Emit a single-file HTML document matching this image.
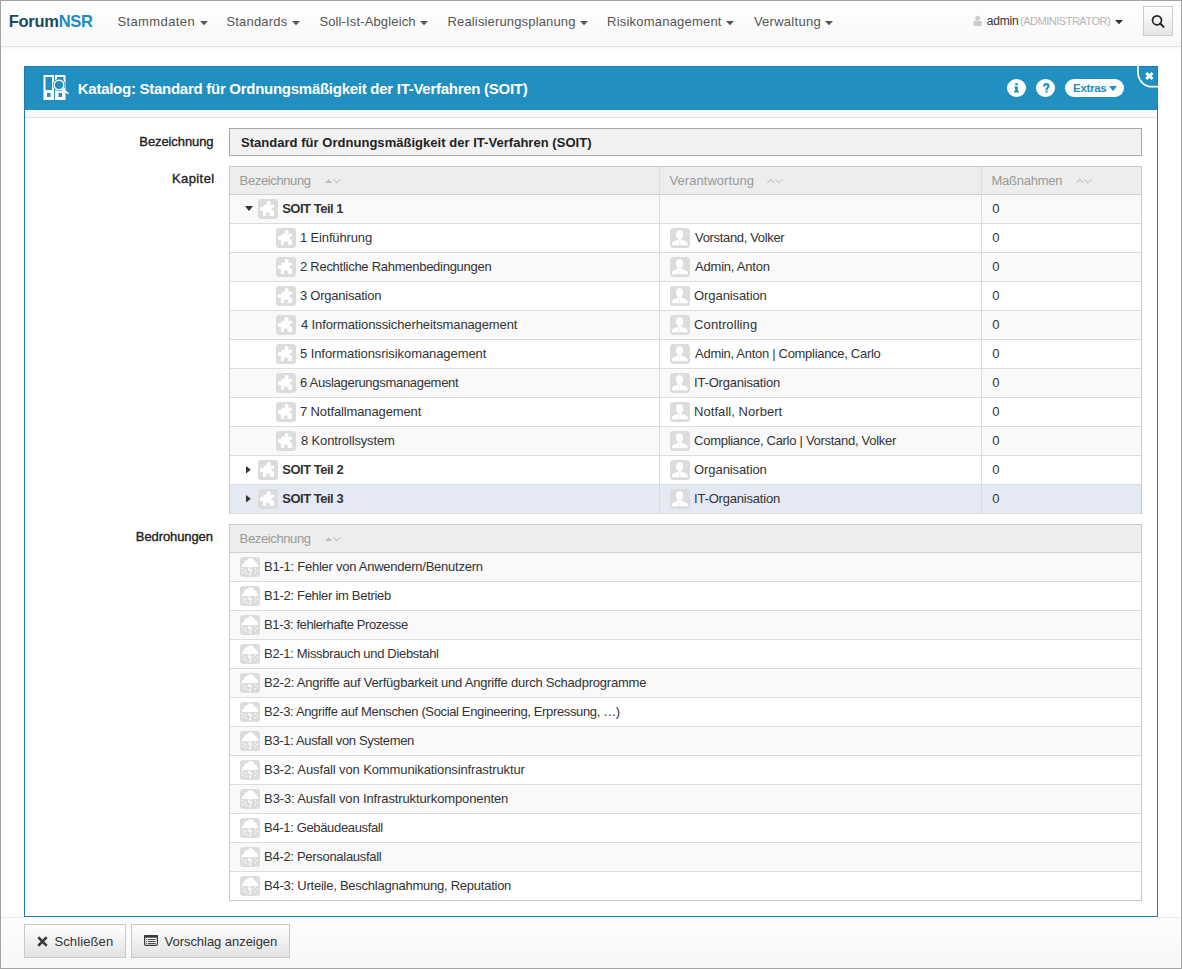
<!DOCTYPE html>
<html><head><meta charset="utf-8"><style>
*{box-sizing:border-box}
html,body{margin:0;padding:0;width:1182px;height:969px;overflow:hidden;background:#fff;font-family:"Liberation Sans",sans-serif;color:#333}
.ab{position:absolute}
.ab svg{display:block}
.tx{position:absolute;white-space:nowrap;line-height:20px}
.hl{position:absolute;height:1px;background:#dcdcdc}
.vl{position:absolute;width:1px;background:#dcdcdc}
.frame{position:absolute;left:0;top:0;width:1182px;height:969px;border:1px solid #a3a3a3;z-index:50}
</style></head><body>
<div class="ab" style="left:0;top:0;width:1182px;height:46px;background:linear-gradient(#fff,#f8f8f8);box-shadow:0 2px 6px rgba(0,0,0,.055)"></div>
<div class="hl" style="left:0;top:46px;width:1182px;background:#e4e4e4"></div>
<svg class="ab" width="8" height="5" viewBox="0 0 8 5" style="left:200px;top:21px"><path d="M0 0h8L4 4.3z" fill="#555"/></svg>
<svg class="ab" width="8" height="5" viewBox="0 0 8 5" style="left:292px;top:21px"><path d="M0 0h8L4 4.3z" fill="#555"/></svg>
<svg class="ab" width="8" height="5" viewBox="0 0 8 5" style="left:420px;top:21px"><path d="M0 0h8L4 4.3z" fill="#555"/></svg>
<svg class="ab" width="8" height="5" viewBox="0 0 8 5" style="left:580px;top:21px"><path d="M0 0h8L4 4.3z" fill="#555"/></svg>
<svg class="ab" width="8" height="5" viewBox="0 0 8 5" style="left:726px;top:21px"><path d="M0 0h8L4 4.3z" fill="#555"/></svg>
<svg class="ab" width="8" height="5" viewBox="0 0 8 5" style="left:825px;top:21px"><path d="M0 0h8L4 4.3z" fill="#555"/></svg>
<svg class="ab" width="10" height="12" viewBox="0 0 10 12" style="left:973px;top:15px"><circle cx="4.7" cy="3.2" r="2.5" fill="#ccc"/><path d="M0.6 6.6Q0.6 5.9 1.3 5.9H8Q8.7 5.9 8.7 6.6V9.4Q8.7 10.9 7.2 10.9H2.1Q0.6 10.9 0.6 9.4z" fill="#ccc"/></svg>
<svg class="ab" width="8" height="5" viewBox="0 0 8 5" style="left:1115px;top:20px"><path d="M0 0h8L4 4.2z" fill="#333"/></svg>
<div class="ab" style="left:1143px;top:6px;width:30px;height:30px;border:1px solid #ccc;background:linear-gradient(#fff,#e6e6e6)">
  <svg width="16" height="16" viewBox="0 0 16 16" style="position:absolute;left:5px;top:6px"><circle cx="8" cy="7.3" r="4.5" fill="none" stroke="#222" stroke-width="1.7"/><path d="M11.2 10.5L14.6 13.9" stroke="#222" stroke-width="1.9" stroke-linecap="round"/></svg>
</div>

<div class="ab" style="left:24px;top:66px;width:1134px;height:851px;border:1px solid #1b7db1;background:#fff"></div>
<div class="ab" style="left:24px;top:66px;width:1134px;height:44px;background:#218fc0;border-top:1px solid #1b7db1;border-left:1px solid #1b7db1;border-right:1px solid #1b7db1"></div>
<div class="ab" style="left:25px;top:110px;width:1132px;height:7px;background:#f9f9f9"></div>
<div class="hl" style="left:25px;top:117px;width:1132px;background:#e0e0e0"></div>
<div class="ab" style="left:43px;top:75px"><svg width="28" height="26" viewBox="0 0 28 26">
<path fill="#fff" fill-rule="evenodd" d="M0.5 0h10.5v25H0.5z M2.5 2h6.5v13h-6.5z M4 18h3.5v4h-3.5z"/>
<path fill="#fff" fill-rule="evenodd" d="M12 0h10.5v25H12z M14 2h6.5v13h-6.5z M15.5 18h3.5v4h-3.5z"/>
<circle cx="16" cy="10" r="6.2" fill="#218fc0"/>
<circle cx="16" cy="10" r="4.8" fill="none" stroke="#fff" stroke-width="1.4"/>
<path d="M19.5 13.5l6 5.5" stroke="#fff" stroke-width="1.6"/>
</svg></div>
<div class="ab" style="left:1007px;top:78.5px;width:19px;height:18.5px;border-radius:50%;background:#fff"><svg width="19" height="19" viewBox="0 0 19 19"><path fill="#218fc0" d="M8.2 4.3h2.7v1.9H8.2z M7.4 7.5H10.9V12.1H11.9V13.4H7V12.1H8.1V8.7H7.4Z"/></svg></div>
<div class="ab" style="left:1036px;top:78.5px;width:19px;height:18.5px;border-radius:50%;background:#fff"><svg width="19" height="19" viewBox="0 0 19 19"><path fill="none" stroke="#218fc0" stroke-width="2.1" d="M8.1 7.4C8.1 6 9 5.1 10.3 5.1S12.5 5.9 12.5 7C12.5 8.5 10.6 8.8 10.6 10.3V10.9"/><rect x="9.4" y="11.7" width="2.3" height="1.8" fill="#218fc0"/></svg></div>
<div class="ab" style="left:1065px;top:79px;width:59px;height:18px;border-radius:9px;background:#fff"></div>
<svg class="ab" width="8" height="5" viewBox="0 0 8 5" style="left:1109px;top:86px"><path d="M0 0h8L4 5z" fill="#218fc0"/></svg>
<svg class="ab" width="26" height="26" viewBox="0 0 26 26" style="left:1133px;top:65px"><path d="M5 0V7.5A14.2 14.2 0 0 0 19.2 21.7H25" fill="none" stroke="#fff" stroke-width="1.7"/><path d="M13.2 7.9l6.3 6.1M19.5 7.9l-6.3 6.1" stroke="#fff" stroke-width="2.8"/></svg>

<div class="ab" style="left:229px;top:128px;width:913px;height:28px;background:#f2f2f2;border:1px solid #a8a8a8"></div>

<div class="ab" style="left:229px;top:166px;width:913px;height:348px;border:1px solid #c9c9c9;background:#fff"></div>
<div class="ab" style="left:230px;top:167px;width:911px;height:27px;background:#ededed"></div>
<div class="hl" style="left:230px;top:194px;width:911px;background:#d0d0d0"></div>
<div class="ab" style="left:230px;top:195px;width:911px;height:28px;background:#f9f9f9"></div><div class="hl" style="left:230px;top:223px;width:911px"></div><div class="ab" style="left:245px;top:206px"><svg width="8" height="5" viewBox="0 0 8 5"><path d="M0 0h8L4 5z" fill="#333"/></svg></div><div class="ab" style="left:258px;top:199px"><svg width="20" height="20" viewBox="0 0 20 20"><rect width="20" height="20" rx="3" fill="#dcdcdc"/><g fill="#fff"><rect x="5.6" y="5.7" width="10.5" height="11.2"/><rect x="4.9" y="11" width="2" height="5.9"/><circle cx="10.6" cy="4" r="2.1"/><rect x="9.6" y="4.5" width="2" height="2"/><circle cx="4" cy="10" r="2.2"/><rect x="4.5" y="8.8" width="2" height="2.6"/></g><g fill="#dcdcdc"><ellipse cx="16.1" cy="10.1" rx="2.9" ry="1.6"/><ellipse cx="9.85" cy="15.6" rx="2" ry="2.3"/><rect x="8.6" y="15.6" width="2.5" height="2"/></g></svg></div><div class="ab" style="left:230px;top:224px;width:911px;height:28px;background:#fff"></div><div class="hl" style="left:230px;top:252px;width:911px"></div><div class="ab" style="left:276px;top:228px"><svg width="20" height="20" viewBox="0 0 20 20"><rect width="20" height="20" rx="3" fill="#dcdcdc"/><g fill="#fff"><rect x="5.6" y="5.7" width="10.5" height="11.2"/><rect x="4.9" y="11" width="2" height="5.9"/><circle cx="10.6" cy="4" r="2.1"/><rect x="9.6" y="4.5" width="2" height="2"/><circle cx="4" cy="10" r="2.2"/><rect x="4.5" y="8.8" width="2" height="2.6"/></g><g fill="#dcdcdc"><ellipse cx="16.1" cy="10.1" rx="2.9" ry="1.6"/><ellipse cx="9.85" cy="15.6" rx="2" ry="2.3"/><rect x="8.6" y="15.6" width="2.5" height="2"/></g></svg></div><div class="ab" style="left:670px;top:228px"><svg width="20" height="20" viewBox="0 0 20 20"><rect width="20" height="20" rx="3" fill="#dcdcdc"/><g fill="#fff"><ellipse cx="9.6" cy="6.6" rx="3.6" ry="4.4"/><path d="M8 10.5h3.2l.6 1.6c2.2.6 5.5 1.3 5.9 3.6V17.2H1.9v-1.5c.4-2.3 3.7-3 5.9-3.6z"/></g><path stroke="#e6e6e6" stroke-width=".7" d="M9.6 11.5v5.7"/></svg></div><div class="ab" style="left:230px;top:253px;width:911px;height:28px;background:#f9f9f9"></div><div class="hl" style="left:230px;top:281px;width:911px"></div><div class="ab" style="left:276px;top:257px"><svg width="20" height="20" viewBox="0 0 20 20"><rect width="20" height="20" rx="3" fill="#dcdcdc"/><g fill="#fff"><rect x="5.6" y="5.7" width="10.5" height="11.2"/><rect x="4.9" y="11" width="2" height="5.9"/><circle cx="10.6" cy="4" r="2.1"/><rect x="9.6" y="4.5" width="2" height="2"/><circle cx="4" cy="10" r="2.2"/><rect x="4.5" y="8.8" width="2" height="2.6"/></g><g fill="#dcdcdc"><ellipse cx="16.1" cy="10.1" rx="2.9" ry="1.6"/><ellipse cx="9.85" cy="15.6" rx="2" ry="2.3"/><rect x="8.6" y="15.6" width="2.5" height="2"/></g></svg></div><div class="ab" style="left:670px;top:257px"><svg width="20" height="20" viewBox="0 0 20 20"><rect width="20" height="20" rx="3" fill="#dcdcdc"/><g fill="#fff"><ellipse cx="9.6" cy="6.6" rx="3.6" ry="4.4"/><path d="M8 10.5h3.2l.6 1.6c2.2.6 5.5 1.3 5.9 3.6V17.2H1.9v-1.5c.4-2.3 3.7-3 5.9-3.6z"/></g><path stroke="#e6e6e6" stroke-width=".7" d="M9.6 11.5v5.7"/></svg></div><div class="ab" style="left:230px;top:282px;width:911px;height:28px;background:#fff"></div><div class="hl" style="left:230px;top:310px;width:911px"></div><div class="ab" style="left:276px;top:286px"><svg width="20" height="20" viewBox="0 0 20 20"><rect width="20" height="20" rx="3" fill="#dcdcdc"/><g fill="#fff"><rect x="5.6" y="5.7" width="10.5" height="11.2"/><rect x="4.9" y="11" width="2" height="5.9"/><circle cx="10.6" cy="4" r="2.1"/><rect x="9.6" y="4.5" width="2" height="2"/><circle cx="4" cy="10" r="2.2"/><rect x="4.5" y="8.8" width="2" height="2.6"/></g><g fill="#dcdcdc"><ellipse cx="16.1" cy="10.1" rx="2.9" ry="1.6"/><ellipse cx="9.85" cy="15.6" rx="2" ry="2.3"/><rect x="8.6" y="15.6" width="2.5" height="2"/></g></svg></div><div class="ab" style="left:670px;top:286px"><svg width="20" height="20" viewBox="0 0 20 20"><rect width="20" height="20" rx="3" fill="#dcdcdc"/><g fill="#fff"><ellipse cx="9.6" cy="6.6" rx="3.6" ry="4.4"/><path d="M8 10.5h3.2l.6 1.6c2.2.6 5.5 1.3 5.9 3.6V17.2H1.9v-1.5c.4-2.3 3.7-3 5.9-3.6z"/></g><path stroke="#e6e6e6" stroke-width=".7" d="M9.6 11.5v5.7"/></svg></div><div class="ab" style="left:230px;top:311px;width:911px;height:28px;background:#f9f9f9"></div><div class="hl" style="left:230px;top:339px;width:911px"></div><div class="ab" style="left:276px;top:315px"><svg width="20" height="20" viewBox="0 0 20 20"><rect width="20" height="20" rx="3" fill="#dcdcdc"/><g fill="#fff"><rect x="5.6" y="5.7" width="10.5" height="11.2"/><rect x="4.9" y="11" width="2" height="5.9"/><circle cx="10.6" cy="4" r="2.1"/><rect x="9.6" y="4.5" width="2" height="2"/><circle cx="4" cy="10" r="2.2"/><rect x="4.5" y="8.8" width="2" height="2.6"/></g><g fill="#dcdcdc"><ellipse cx="16.1" cy="10.1" rx="2.9" ry="1.6"/><ellipse cx="9.85" cy="15.6" rx="2" ry="2.3"/><rect x="8.6" y="15.6" width="2.5" height="2"/></g></svg></div><div class="ab" style="left:670px;top:315px"><svg width="20" height="20" viewBox="0 0 20 20"><rect width="20" height="20" rx="3" fill="#dcdcdc"/><g fill="#fff"><ellipse cx="9.6" cy="6.6" rx="3.6" ry="4.4"/><path d="M8 10.5h3.2l.6 1.6c2.2.6 5.5 1.3 5.9 3.6V17.2H1.9v-1.5c.4-2.3 3.7-3 5.9-3.6z"/></g><path stroke="#e6e6e6" stroke-width=".7" d="M9.6 11.5v5.7"/></svg></div><div class="ab" style="left:230px;top:340px;width:911px;height:28px;background:#fff"></div><div class="hl" style="left:230px;top:368px;width:911px"></div><div class="ab" style="left:276px;top:344px"><svg width="20" height="20" viewBox="0 0 20 20"><rect width="20" height="20" rx="3" fill="#dcdcdc"/><g fill="#fff"><rect x="5.6" y="5.7" width="10.5" height="11.2"/><rect x="4.9" y="11" width="2" height="5.9"/><circle cx="10.6" cy="4" r="2.1"/><rect x="9.6" y="4.5" width="2" height="2"/><circle cx="4" cy="10" r="2.2"/><rect x="4.5" y="8.8" width="2" height="2.6"/></g><g fill="#dcdcdc"><ellipse cx="16.1" cy="10.1" rx="2.9" ry="1.6"/><ellipse cx="9.85" cy="15.6" rx="2" ry="2.3"/><rect x="8.6" y="15.6" width="2.5" height="2"/></g></svg></div><div class="ab" style="left:670px;top:344px"><svg width="20" height="20" viewBox="0 0 20 20"><rect width="20" height="20" rx="3" fill="#dcdcdc"/><g fill="#fff"><ellipse cx="9.6" cy="6.6" rx="3.6" ry="4.4"/><path d="M8 10.5h3.2l.6 1.6c2.2.6 5.5 1.3 5.9 3.6V17.2H1.9v-1.5c.4-2.3 3.7-3 5.9-3.6z"/></g><path stroke="#e6e6e6" stroke-width=".7" d="M9.6 11.5v5.7"/></svg></div><div class="ab" style="left:230px;top:369px;width:911px;height:28px;background:#f9f9f9"></div><div class="hl" style="left:230px;top:397px;width:911px"></div><div class="ab" style="left:276px;top:373px"><svg width="20" height="20" viewBox="0 0 20 20"><rect width="20" height="20" rx="3" fill="#dcdcdc"/><g fill="#fff"><rect x="5.6" y="5.7" width="10.5" height="11.2"/><rect x="4.9" y="11" width="2" height="5.9"/><circle cx="10.6" cy="4" r="2.1"/><rect x="9.6" y="4.5" width="2" height="2"/><circle cx="4" cy="10" r="2.2"/><rect x="4.5" y="8.8" width="2" height="2.6"/></g><g fill="#dcdcdc"><ellipse cx="16.1" cy="10.1" rx="2.9" ry="1.6"/><ellipse cx="9.85" cy="15.6" rx="2" ry="2.3"/><rect x="8.6" y="15.6" width="2.5" height="2"/></g></svg></div><div class="ab" style="left:670px;top:373px"><svg width="20" height="20" viewBox="0 0 20 20"><rect width="20" height="20" rx="3" fill="#dcdcdc"/><g fill="#fff"><ellipse cx="9.6" cy="6.6" rx="3.6" ry="4.4"/><path d="M8 10.5h3.2l.6 1.6c2.2.6 5.5 1.3 5.9 3.6V17.2H1.9v-1.5c.4-2.3 3.7-3 5.9-3.6z"/></g><path stroke="#e6e6e6" stroke-width=".7" d="M9.6 11.5v5.7"/></svg></div><div class="ab" style="left:230px;top:398px;width:911px;height:28px;background:#fff"></div><div class="hl" style="left:230px;top:426px;width:911px"></div><div class="ab" style="left:276px;top:402px"><svg width="20" height="20" viewBox="0 0 20 20"><rect width="20" height="20" rx="3" fill="#dcdcdc"/><g fill="#fff"><rect x="5.6" y="5.7" width="10.5" height="11.2"/><rect x="4.9" y="11" width="2" height="5.9"/><circle cx="10.6" cy="4" r="2.1"/><rect x="9.6" y="4.5" width="2" height="2"/><circle cx="4" cy="10" r="2.2"/><rect x="4.5" y="8.8" width="2" height="2.6"/></g><g fill="#dcdcdc"><ellipse cx="16.1" cy="10.1" rx="2.9" ry="1.6"/><ellipse cx="9.85" cy="15.6" rx="2" ry="2.3"/><rect x="8.6" y="15.6" width="2.5" height="2"/></g></svg></div><div class="ab" style="left:670px;top:402px"><svg width="20" height="20" viewBox="0 0 20 20"><rect width="20" height="20" rx="3" fill="#dcdcdc"/><g fill="#fff"><ellipse cx="9.6" cy="6.6" rx="3.6" ry="4.4"/><path d="M8 10.5h3.2l.6 1.6c2.2.6 5.5 1.3 5.9 3.6V17.2H1.9v-1.5c.4-2.3 3.7-3 5.9-3.6z"/></g><path stroke="#e6e6e6" stroke-width=".7" d="M9.6 11.5v5.7"/></svg></div><div class="ab" style="left:230px;top:427px;width:911px;height:28px;background:#f9f9f9"></div><div class="hl" style="left:230px;top:455px;width:911px"></div><div class="ab" style="left:276px;top:431px"><svg width="20" height="20" viewBox="0 0 20 20"><rect width="20" height="20" rx="3" fill="#dcdcdc"/><g fill="#fff"><rect x="5.6" y="5.7" width="10.5" height="11.2"/><rect x="4.9" y="11" width="2" height="5.9"/><circle cx="10.6" cy="4" r="2.1"/><rect x="9.6" y="4.5" width="2" height="2"/><circle cx="4" cy="10" r="2.2"/><rect x="4.5" y="8.8" width="2" height="2.6"/></g><g fill="#dcdcdc"><ellipse cx="16.1" cy="10.1" rx="2.9" ry="1.6"/><ellipse cx="9.85" cy="15.6" rx="2" ry="2.3"/><rect x="8.6" y="15.6" width="2.5" height="2"/></g></svg></div><div class="ab" style="left:670px;top:431px"><svg width="20" height="20" viewBox="0 0 20 20"><rect width="20" height="20" rx="3" fill="#dcdcdc"/><g fill="#fff"><ellipse cx="9.6" cy="6.6" rx="3.6" ry="4.4"/><path d="M8 10.5h3.2l.6 1.6c2.2.6 5.5 1.3 5.9 3.6V17.2H1.9v-1.5c.4-2.3 3.7-3 5.9-3.6z"/></g><path stroke="#e6e6e6" stroke-width=".7" d="M9.6 11.5v5.7"/></svg></div><div class="ab" style="left:230px;top:456px;width:911px;height:28px;background:#fff"></div><div class="hl" style="left:230px;top:484px;width:911px"></div><div class="ab" style="left:246px;top:465.6px"><svg width="5" height="8" viewBox="0 0 5 8"><path d="M0 0v7.4L4.8 3.7z" fill="#333"/></svg></div><div class="ab" style="left:258px;top:460px"><svg width="20" height="20" viewBox="0 0 20 20"><rect width="20" height="20" rx="3" fill="#dcdcdc"/><g fill="#fff"><rect x="5.6" y="5.7" width="10.5" height="11.2"/><rect x="4.9" y="11" width="2" height="5.9"/><circle cx="10.6" cy="4" r="2.1"/><rect x="9.6" y="4.5" width="2" height="2"/><circle cx="4" cy="10" r="2.2"/><rect x="4.5" y="8.8" width="2" height="2.6"/></g><g fill="#dcdcdc"><ellipse cx="16.1" cy="10.1" rx="2.9" ry="1.6"/><ellipse cx="9.85" cy="15.6" rx="2" ry="2.3"/><rect x="8.6" y="15.6" width="2.5" height="2"/></g></svg></div><div class="ab" style="left:670px;top:460px"><svg width="20" height="20" viewBox="0 0 20 20"><rect width="20" height="20" rx="3" fill="#dcdcdc"/><g fill="#fff"><ellipse cx="9.6" cy="6.6" rx="3.6" ry="4.4"/><path d="M8 10.5h3.2l.6 1.6c2.2.6 5.5 1.3 5.9 3.6V17.2H1.9v-1.5c.4-2.3 3.7-3 5.9-3.6z"/></g><path stroke="#e6e6e6" stroke-width=".7" d="M9.6 11.5v5.7"/></svg></div><div class="ab" style="left:230px;top:485px;width:911px;height:28px;background:#e4e9f4"></div><div class="hl" style="left:230px;top:513px;width:911px"></div><div class="ab" style="left:246px;top:494.6px"><svg width="5" height="8" viewBox="0 0 5 8"><path d="M0 0v7.4L4.8 3.7z" fill="#333"/></svg></div><div class="ab" style="left:258px;top:489px"><svg width="20" height="20" viewBox="0 0 20 20"><rect width="20" height="20" rx="3" fill="#dcdcdc"/><g fill="#fff"><rect x="5.6" y="5.7" width="10.5" height="11.2"/><rect x="4.9" y="11" width="2" height="5.9"/><circle cx="10.6" cy="4" r="2.1"/><rect x="9.6" y="4.5" width="2" height="2"/><circle cx="4" cy="10" r="2.2"/><rect x="4.5" y="8.8" width="2" height="2.6"/></g><g fill="#dcdcdc"><ellipse cx="16.1" cy="10.1" rx="2.9" ry="1.6"/><ellipse cx="9.85" cy="15.6" rx="2" ry="2.3"/><rect x="8.6" y="15.6" width="2.5" height="2"/></g></svg></div><div class="ab" style="left:670px;top:489px"><svg width="20" height="20" viewBox="0 0 20 20"><rect width="20" height="20" rx="3" fill="#dcdcdc"/><g fill="#fff"><ellipse cx="9.6" cy="6.6" rx="3.6" ry="4.4"/><path d="M8 10.5h3.2l.6 1.6c2.2.6 5.5 1.3 5.9 3.6V17.2H1.9v-1.5c.4-2.3 3.7-3 5.9-3.6z"/></g><path stroke="#e6e6e6" stroke-width=".7" d="M9.6 11.5v5.7"/></svg></div><div class="vl" style="left:659px;top:167px;height:346px"></div><div class="vl" style="left:981px;top:167px;height:346px"></div>
<div class="ab" style="left:325px;top:178px"><svg width="16" height="6" viewBox="0 0 16 6"><path d="M0 5L3.6 1.2 7.2 5z" fill="#bbb"/><path d="M8.3 1.4L11.9 4.8 15.5 1.4" stroke="#c4c4c4" stroke-width="1.1" fill="none"/></svg></div><div class="ab" style="left:767px;top:178px"><svg width="16" height="6" viewBox="0 0 16 6"><path d="M0.4 4.8L3.8 1.4 7.2 4.8" stroke="#c4c4c4" stroke-width="1.1" fill="none"/><path d="M8.3 1.4L11.9 4.8 15.5 1.4" stroke="#c4c4c4" stroke-width="1.1" fill="none"/></svg></div><div class="ab" style="left:1076px;top:178px"><svg width="16" height="6" viewBox="0 0 16 6"><path d="M0.4 4.8L3.8 1.4 7.2 4.8" stroke="#c4c4c4" stroke-width="1.1" fill="none"/><path d="M8.3 1.4L11.9 4.8 15.5 1.4" stroke="#c4c4c4" stroke-width="1.1" fill="none"/></svg></div>

<div class="ab" style="left:229px;top:524px;width:913px;height:377px;border:1px solid #c9c9c9;background:#fff"></div>
<div class="ab" style="left:230px;top:525px;width:911px;height:27px;background:#ededed"></div>
<div class="hl" style="left:230px;top:552px;width:911px;background:#d0d0d0"></div>
<div class="ab" style="left:230px;top:553px;width:911px;height:28px;background:#f9f9f9"></div><div class="hl" style="left:230px;top:581px;width:911px"></div><div class="ab" style="left:240px;top:557px"><svg width="20" height="20" viewBox="0 0 20 20"><rect width="20" height="20" rx="3" fill="#dcdcdc"/><path fill="#fff" d="M1.8 9.9C1.6 8.4 2.4 7.2 3.8 7 3.9 4.6 5.4 2.9 7.5 2.9 8.2 1.8 9.3 1.2 10.6 1.2c2.1 0 3.4 1.4 3.8 3.3 1.6.1 2.7 1.3 2.8 2.8.8.5 1.2 1.5.9 2.6z"/><path fill="#fff" d="M9.1 10.2h1.4l-1.1 2.1 3.1.3-2.2 3.9-.7-.2 1.3-2.5-3.2-.3z"/><g fill="#fff"><circle cx="2.4" cy="11.7" r=".8"/><circle cx="5.3" cy="13.4" r=".8"/><circle cx="3" cy="15.2" r=".8"/><circle cx="6.3" cy="16.4" r=".8"/><circle cx="15.4" cy="11.8" r=".7"/><circle cx="17.4" cy="13.5" r=".8"/><circle cx="15.5" cy="15.8" r=".8"/><circle cx="10.1" cy="17.3" r="1.1"/></g></svg></div><div class="ab" style="left:230px;top:582px;width:911px;height:28px;background:#fff"></div><div class="hl" style="left:230px;top:610px;width:911px"></div><div class="ab" style="left:240px;top:586px"><svg width="20" height="20" viewBox="0 0 20 20"><rect width="20" height="20" rx="3" fill="#dcdcdc"/><path fill="#fff" d="M1.8 9.9C1.6 8.4 2.4 7.2 3.8 7 3.9 4.6 5.4 2.9 7.5 2.9 8.2 1.8 9.3 1.2 10.6 1.2c2.1 0 3.4 1.4 3.8 3.3 1.6.1 2.7 1.3 2.8 2.8.8.5 1.2 1.5.9 2.6z"/><path fill="#fff" d="M9.1 10.2h1.4l-1.1 2.1 3.1.3-2.2 3.9-.7-.2 1.3-2.5-3.2-.3z"/><g fill="#fff"><circle cx="2.4" cy="11.7" r=".8"/><circle cx="5.3" cy="13.4" r=".8"/><circle cx="3" cy="15.2" r=".8"/><circle cx="6.3" cy="16.4" r=".8"/><circle cx="15.4" cy="11.8" r=".7"/><circle cx="17.4" cy="13.5" r=".8"/><circle cx="15.5" cy="15.8" r=".8"/><circle cx="10.1" cy="17.3" r="1.1"/></g></svg></div><div class="ab" style="left:230px;top:611px;width:911px;height:28px;background:#f9f9f9"></div><div class="hl" style="left:230px;top:639px;width:911px"></div><div class="ab" style="left:240px;top:615px"><svg width="20" height="20" viewBox="0 0 20 20"><rect width="20" height="20" rx="3" fill="#dcdcdc"/><path fill="#fff" d="M1.8 9.9C1.6 8.4 2.4 7.2 3.8 7 3.9 4.6 5.4 2.9 7.5 2.9 8.2 1.8 9.3 1.2 10.6 1.2c2.1 0 3.4 1.4 3.8 3.3 1.6.1 2.7 1.3 2.8 2.8.8.5 1.2 1.5.9 2.6z"/><path fill="#fff" d="M9.1 10.2h1.4l-1.1 2.1 3.1.3-2.2 3.9-.7-.2 1.3-2.5-3.2-.3z"/><g fill="#fff"><circle cx="2.4" cy="11.7" r=".8"/><circle cx="5.3" cy="13.4" r=".8"/><circle cx="3" cy="15.2" r=".8"/><circle cx="6.3" cy="16.4" r=".8"/><circle cx="15.4" cy="11.8" r=".7"/><circle cx="17.4" cy="13.5" r=".8"/><circle cx="15.5" cy="15.8" r=".8"/><circle cx="10.1" cy="17.3" r="1.1"/></g></svg></div><div class="ab" style="left:230px;top:640px;width:911px;height:28px;background:#fff"></div><div class="hl" style="left:230px;top:668px;width:911px"></div><div class="ab" style="left:240px;top:644px"><svg width="20" height="20" viewBox="0 0 20 20"><rect width="20" height="20" rx="3" fill="#dcdcdc"/><path fill="#fff" d="M1.8 9.9C1.6 8.4 2.4 7.2 3.8 7 3.9 4.6 5.4 2.9 7.5 2.9 8.2 1.8 9.3 1.2 10.6 1.2c2.1 0 3.4 1.4 3.8 3.3 1.6.1 2.7 1.3 2.8 2.8.8.5 1.2 1.5.9 2.6z"/><path fill="#fff" d="M9.1 10.2h1.4l-1.1 2.1 3.1.3-2.2 3.9-.7-.2 1.3-2.5-3.2-.3z"/><g fill="#fff"><circle cx="2.4" cy="11.7" r=".8"/><circle cx="5.3" cy="13.4" r=".8"/><circle cx="3" cy="15.2" r=".8"/><circle cx="6.3" cy="16.4" r=".8"/><circle cx="15.4" cy="11.8" r=".7"/><circle cx="17.4" cy="13.5" r=".8"/><circle cx="15.5" cy="15.8" r=".8"/><circle cx="10.1" cy="17.3" r="1.1"/></g></svg></div><div class="ab" style="left:230px;top:669px;width:911px;height:28px;background:#f9f9f9"></div><div class="hl" style="left:230px;top:697px;width:911px"></div><div class="ab" style="left:240px;top:673px"><svg width="20" height="20" viewBox="0 0 20 20"><rect width="20" height="20" rx="3" fill="#dcdcdc"/><path fill="#fff" d="M1.8 9.9C1.6 8.4 2.4 7.2 3.8 7 3.9 4.6 5.4 2.9 7.5 2.9 8.2 1.8 9.3 1.2 10.6 1.2c2.1 0 3.4 1.4 3.8 3.3 1.6.1 2.7 1.3 2.8 2.8.8.5 1.2 1.5.9 2.6z"/><path fill="#fff" d="M9.1 10.2h1.4l-1.1 2.1 3.1.3-2.2 3.9-.7-.2 1.3-2.5-3.2-.3z"/><g fill="#fff"><circle cx="2.4" cy="11.7" r=".8"/><circle cx="5.3" cy="13.4" r=".8"/><circle cx="3" cy="15.2" r=".8"/><circle cx="6.3" cy="16.4" r=".8"/><circle cx="15.4" cy="11.8" r=".7"/><circle cx="17.4" cy="13.5" r=".8"/><circle cx="15.5" cy="15.8" r=".8"/><circle cx="10.1" cy="17.3" r="1.1"/></g></svg></div><div class="ab" style="left:230px;top:698px;width:911px;height:28px;background:#fff"></div><div class="hl" style="left:230px;top:726px;width:911px"></div><div class="ab" style="left:240px;top:702px"><svg width="20" height="20" viewBox="0 0 20 20"><rect width="20" height="20" rx="3" fill="#dcdcdc"/><path fill="#fff" d="M1.8 9.9C1.6 8.4 2.4 7.2 3.8 7 3.9 4.6 5.4 2.9 7.5 2.9 8.2 1.8 9.3 1.2 10.6 1.2c2.1 0 3.4 1.4 3.8 3.3 1.6.1 2.7 1.3 2.8 2.8.8.5 1.2 1.5.9 2.6z"/><path fill="#fff" d="M9.1 10.2h1.4l-1.1 2.1 3.1.3-2.2 3.9-.7-.2 1.3-2.5-3.2-.3z"/><g fill="#fff"><circle cx="2.4" cy="11.7" r=".8"/><circle cx="5.3" cy="13.4" r=".8"/><circle cx="3" cy="15.2" r=".8"/><circle cx="6.3" cy="16.4" r=".8"/><circle cx="15.4" cy="11.8" r=".7"/><circle cx="17.4" cy="13.5" r=".8"/><circle cx="15.5" cy="15.8" r=".8"/><circle cx="10.1" cy="17.3" r="1.1"/></g></svg></div><div class="ab" style="left:230px;top:727px;width:911px;height:28px;background:#f9f9f9"></div><div class="hl" style="left:230px;top:755px;width:911px"></div><div class="ab" style="left:240px;top:731px"><svg width="20" height="20" viewBox="0 0 20 20"><rect width="20" height="20" rx="3" fill="#dcdcdc"/><path fill="#fff" d="M1.8 9.9C1.6 8.4 2.4 7.2 3.8 7 3.9 4.6 5.4 2.9 7.5 2.9 8.2 1.8 9.3 1.2 10.6 1.2c2.1 0 3.4 1.4 3.8 3.3 1.6.1 2.7 1.3 2.8 2.8.8.5 1.2 1.5.9 2.6z"/><path fill="#fff" d="M9.1 10.2h1.4l-1.1 2.1 3.1.3-2.2 3.9-.7-.2 1.3-2.5-3.2-.3z"/><g fill="#fff"><circle cx="2.4" cy="11.7" r=".8"/><circle cx="5.3" cy="13.4" r=".8"/><circle cx="3" cy="15.2" r=".8"/><circle cx="6.3" cy="16.4" r=".8"/><circle cx="15.4" cy="11.8" r=".7"/><circle cx="17.4" cy="13.5" r=".8"/><circle cx="15.5" cy="15.8" r=".8"/><circle cx="10.1" cy="17.3" r="1.1"/></g></svg></div><div class="ab" style="left:230px;top:756px;width:911px;height:28px;background:#fff"></div><div class="hl" style="left:230px;top:784px;width:911px"></div><div class="ab" style="left:240px;top:760px"><svg width="20" height="20" viewBox="0 0 20 20"><rect width="20" height="20" rx="3" fill="#dcdcdc"/><path fill="#fff" d="M1.8 9.9C1.6 8.4 2.4 7.2 3.8 7 3.9 4.6 5.4 2.9 7.5 2.9 8.2 1.8 9.3 1.2 10.6 1.2c2.1 0 3.4 1.4 3.8 3.3 1.6.1 2.7 1.3 2.8 2.8.8.5 1.2 1.5.9 2.6z"/><path fill="#fff" d="M9.1 10.2h1.4l-1.1 2.1 3.1.3-2.2 3.9-.7-.2 1.3-2.5-3.2-.3z"/><g fill="#fff"><circle cx="2.4" cy="11.7" r=".8"/><circle cx="5.3" cy="13.4" r=".8"/><circle cx="3" cy="15.2" r=".8"/><circle cx="6.3" cy="16.4" r=".8"/><circle cx="15.4" cy="11.8" r=".7"/><circle cx="17.4" cy="13.5" r=".8"/><circle cx="15.5" cy="15.8" r=".8"/><circle cx="10.1" cy="17.3" r="1.1"/></g></svg></div><div class="ab" style="left:230px;top:785px;width:911px;height:28px;background:#f9f9f9"></div><div class="hl" style="left:230px;top:813px;width:911px"></div><div class="ab" style="left:240px;top:789px"><svg width="20" height="20" viewBox="0 0 20 20"><rect width="20" height="20" rx="3" fill="#dcdcdc"/><path fill="#fff" d="M1.8 9.9C1.6 8.4 2.4 7.2 3.8 7 3.9 4.6 5.4 2.9 7.5 2.9 8.2 1.8 9.3 1.2 10.6 1.2c2.1 0 3.4 1.4 3.8 3.3 1.6.1 2.7 1.3 2.8 2.8.8.5 1.2 1.5.9 2.6z"/><path fill="#fff" d="M9.1 10.2h1.4l-1.1 2.1 3.1.3-2.2 3.9-.7-.2 1.3-2.5-3.2-.3z"/><g fill="#fff"><circle cx="2.4" cy="11.7" r=".8"/><circle cx="5.3" cy="13.4" r=".8"/><circle cx="3" cy="15.2" r=".8"/><circle cx="6.3" cy="16.4" r=".8"/><circle cx="15.4" cy="11.8" r=".7"/><circle cx="17.4" cy="13.5" r=".8"/><circle cx="15.5" cy="15.8" r=".8"/><circle cx="10.1" cy="17.3" r="1.1"/></g></svg></div><div class="ab" style="left:230px;top:814px;width:911px;height:28px;background:#fff"></div><div class="hl" style="left:230px;top:842px;width:911px"></div><div class="ab" style="left:240px;top:818px"><svg width="20" height="20" viewBox="0 0 20 20"><rect width="20" height="20" rx="3" fill="#dcdcdc"/><path fill="#fff" d="M1.8 9.9C1.6 8.4 2.4 7.2 3.8 7 3.9 4.6 5.4 2.9 7.5 2.9 8.2 1.8 9.3 1.2 10.6 1.2c2.1 0 3.4 1.4 3.8 3.3 1.6.1 2.7 1.3 2.8 2.8.8.5 1.2 1.5.9 2.6z"/><path fill="#fff" d="M9.1 10.2h1.4l-1.1 2.1 3.1.3-2.2 3.9-.7-.2 1.3-2.5-3.2-.3z"/><g fill="#fff"><circle cx="2.4" cy="11.7" r=".8"/><circle cx="5.3" cy="13.4" r=".8"/><circle cx="3" cy="15.2" r=".8"/><circle cx="6.3" cy="16.4" r=".8"/><circle cx="15.4" cy="11.8" r=".7"/><circle cx="17.4" cy="13.5" r=".8"/><circle cx="15.5" cy="15.8" r=".8"/><circle cx="10.1" cy="17.3" r="1.1"/></g></svg></div><div class="ab" style="left:230px;top:843px;width:911px;height:28px;background:#f9f9f9"></div><div class="hl" style="left:230px;top:871px;width:911px"></div><div class="ab" style="left:240px;top:847px"><svg width="20" height="20" viewBox="0 0 20 20"><rect width="20" height="20" rx="3" fill="#dcdcdc"/><path fill="#fff" d="M1.8 9.9C1.6 8.4 2.4 7.2 3.8 7 3.9 4.6 5.4 2.9 7.5 2.9 8.2 1.8 9.3 1.2 10.6 1.2c2.1 0 3.4 1.4 3.8 3.3 1.6.1 2.7 1.3 2.8 2.8.8.5 1.2 1.5.9 2.6z"/><path fill="#fff" d="M9.1 10.2h1.4l-1.1 2.1 3.1.3-2.2 3.9-.7-.2 1.3-2.5-3.2-.3z"/><g fill="#fff"><circle cx="2.4" cy="11.7" r=".8"/><circle cx="5.3" cy="13.4" r=".8"/><circle cx="3" cy="15.2" r=".8"/><circle cx="6.3" cy="16.4" r=".8"/><circle cx="15.4" cy="11.8" r=".7"/><circle cx="17.4" cy="13.5" r=".8"/><circle cx="15.5" cy="15.8" r=".8"/><circle cx="10.1" cy="17.3" r="1.1"/></g></svg></div><div class="ab" style="left:230px;top:872px;width:911px;height:28px;background:#fff"></div><div class="ab" style="left:240px;top:876px"><svg width="20" height="20" viewBox="0 0 20 20"><rect width="20" height="20" rx="3" fill="#dcdcdc"/><path fill="#fff" d="M1.8 9.9C1.6 8.4 2.4 7.2 3.8 7 3.9 4.6 5.4 2.9 7.5 2.9 8.2 1.8 9.3 1.2 10.6 1.2c2.1 0 3.4 1.4 3.8 3.3 1.6.1 2.7 1.3 2.8 2.8.8.5 1.2 1.5.9 2.6z"/><path fill="#fff" d="M9.1 10.2h1.4l-1.1 2.1 3.1.3-2.2 3.9-.7-.2 1.3-2.5-3.2-.3z"/><g fill="#fff"><circle cx="2.4" cy="11.7" r=".8"/><circle cx="5.3" cy="13.4" r=".8"/><circle cx="3" cy="15.2" r=".8"/><circle cx="6.3" cy="16.4" r=".8"/><circle cx="15.4" cy="11.8" r=".7"/><circle cx="17.4" cy="13.5" r=".8"/><circle cx="15.5" cy="15.8" r=".8"/><circle cx="10.1" cy="17.3" r="1.1"/></g></svg></div>
<div class="ab" style="left:325px;top:536px"><svg width="16" height="6" viewBox="0 0 16 6"><path d="M0 5L3.6 1.2 7.2 5z" fill="#bbb"/><path d="M8.3 1.4L11.9 4.8 15.5 1.4" stroke="#c4c4c4" stroke-width="1.1" fill="none"/></svg></div>

<div class="ab" style="left:0;top:917px;width:1182px;height:52px;background:linear-gradient(#fdfdfd,#f7f7f7)"></div>
<div class="hl" style="left:0;top:917px;width:24px;background:#e8e8e8"></div>
<div class="hl" style="left:1158px;top:917px;width:24px;background:#e8e8e8"></div>
<div class="ab" style="left:24px;top:924px;width:102px;height:34px;border:1px solid #c8c8c8;background:linear-gradient(#fff,#e2e2e2)"></div>
<svg class="ab" width="11" height="11" viewBox="0 0 11 11" style="left:37px;top:935.5px"><path d="M2.2 2.2L8.8 8.8M8.8 2.2L2.2 8.8" stroke="#3a3a3a" stroke-width="2.6" stroke-linecap="square"/></svg>
<div class="ab" style="left:131px;top:924px;width:159px;height:34px;border:1px solid #c8c8c8;background:linear-gradient(#fff,#e2e2e2)"></div>
<svg class="ab" width="14" height="11" viewBox="0 0 14 11" style="left:144px;top:935px"><rect x="0.6" y="0.6" width="12.8" height="9.8" rx="1.2" fill="#fff" stroke="#3a3a3a" stroke-width="1.2"/><rect x="0" y="0" width="14" height="2.8" rx="1" fill="#3a3a3a"/><g fill="#3a3a3a"><circle cx="2.5" cy="4.6" r=".6"/><circle cx="2.5" cy="6.6" r=".6"/><circle cx="2.5" cy="8.6" r=".6"/></g><path d="M4.3 4.6h7M4.3 6.6h7M4.3 8.6h7" stroke="#3a3a3a" stroke-width="1" stroke-linecap="round"/></svg>
<div class="tx" style="left:8.7px;top:11.0px;font-size:16.5px;font-weight:700;letter-spacing:-0.271px;color:#1e4b5c;">Forum<span style="color:#1c8bc2">NSR</span></div><div class="tx" style="left:117.4px;top:12.0px;font-size:13px;font-weight:400;letter-spacing:0.4px;color:#555;">Stammdaten</div><div class="tx" style="left:226.4px;top:12.0px;font-size:13px;font-weight:400;letter-spacing:0.187px;color:#555;">Standards</div><div class="tx" style="left:319.4px;top:12.0px;font-size:13px;font-weight:400;letter-spacing:0.138px;color:#555;">Soll-Ist-Abgleich</div><div class="tx" style="left:447.5px;top:12.0px;font-size:13px;font-weight:400;letter-spacing:0.153px;color:#555;">Realisierungsplanung</div><div class="tx" style="left:607.1px;top:12.0px;font-size:13px;font-weight:400;letter-spacing:0.207px;color:#555;">Risikomanagement</div><div class="tx" style="left:753.9px;top:12.0px;font-size:13px;font-weight:400;letter-spacing:0.267px;color:#555;">Verwaltung</div><div class="tx" style="left:986.7px;top:11.0px;font-size:12px;font-weight:400;letter-spacing:-0.2px;color:#333;">admin</div><div class="tx" style="left:1020.0px;top:11.0px;font-size:11px;font-weight:400;letter-spacing:-0.479px;color:#b5b5b5;">(ADMINISTRATOR)</div><div class="tx" style="left:77.8px;top:79.0px;font-size:15px;font-weight:700;letter-spacing:-0.271px;color:#fff;">Katalog: Standard für Ordnungsmäßigkeit der IT-Verfahren (SOIT)</div><div class="tx" style="left:1073.0px;top:77.7px;font-size:11.5px;font-weight:700;letter-spacing:-0.28px;color:#218fc0;">Extras</div><div class="tx" style="left:139.3px;top:131.5px;font-size:13px;font-weight:400;letter-spacing:-0.09px;color:#222;-webkit-text-stroke:0.35px currentColor;">Bezeichnung</div><div class="tx" style="left:172.0px;top:169.0px;font-size:13px;font-weight:400;letter-spacing:0.4px;color:#222;-webkit-text-stroke:0.35px currentColor;">Kapitel</div><div class="tx" style="left:135.8px;top:527.0px;font-size:13px;font-weight:400;letter-spacing:-0.09px;color:#222;-webkit-text-stroke:0.35px currentColor;">Bedrohungen</div><div class="tx" style="left:241.0px;top:133.0px;font-size:13px;font-weight:700;letter-spacing:0.03px;color:#222;">Standard für Ordnungsmäßigkeit der IT-Verfahren (SOIT)</div><div class="tx" style="left:239.6px;top:170.7px;font-size:13px;font-weight:400;letter-spacing:-0.37px;color:#999;">Bezeichnung</div><div class="tx" style="left:669.5px;top:170.7px;font-size:13px;font-weight:400;letter-spacing:0.05px;color:#999;">Verantwortung</div><div class="tx" style="left:991.4px;top:170.7px;font-size:13px;font-weight:400;letter-spacing:-0.225px;color:#999;">Maßnahmen</div><div class="tx" style="left:239.6px;top:528.5px;font-size:13px;font-weight:400;letter-spacing:-0.37px;color:#999;">Bezeichnung</div><div class="tx" style="left:282.2px;top:199.0px;font-size:13px;font-weight:700;letter-spacing:-0.49px;color:#333;">SOIT Teil 1</div><div class="tx" style="left:300.0px;top:228.0px;font-size:13px;font-weight:400;letter-spacing:-0.145px;color:#333;">1 Einführung</div><div class="tx" style="left:300.0px;top:257.0px;font-size:13px;font-weight:400;letter-spacing:-0.269px;color:#333;">2 Rechtliche Rahmenbedingungen</div><div class="tx" style="left:300.0px;top:286.0px;font-size:13px;font-weight:400;letter-spacing:-0.238px;color:#333;">3 Organisation</div><div class="tx" style="left:301.0px;top:315.0px;font-size:13px;font-weight:400;letter-spacing:-0.118px;color:#333;">4 Informationssicherheitsmanagement</div><div class="tx" style="left:300.0px;top:344.0px;font-size:13px;font-weight:400;letter-spacing:-0.079px;color:#333;">5 Informationsrisikomanagement</div><div class="tx" style="left:300.0px;top:373.0px;font-size:13px;font-weight:400;letter-spacing:-0.3px;color:#333;">6 Auslagerungsmanagement</div><div class="tx" style="left:300.0px;top:402.0px;font-size:13px;font-weight:400;letter-spacing:-0.128px;color:#333;">7 Notfallmanagement</div><div class="tx" style="left:301.0px;top:431.0px;font-size:13px;font-weight:400;letter-spacing:-0.153px;color:#333;">8 Kontrollsystem</div><div class="tx" style="left:282.2px;top:460.0px;font-size:13px;font-weight:700;letter-spacing:-0.48px;color:#333;">SOIT Teil 2</div><div class="tx" style="left:282.2px;top:489.0px;font-size:13px;font-weight:700;letter-spacing:-0.48px;color:#333;">SOIT Teil 3</div><div class="tx" style="left:695.1px;top:228.0px;font-size:13px;font-weight:400;letter-spacing:-0.34px;color:#333;">Vorstand, Volker</div><div class="tx" style="left:695.1px;top:257.0px;font-size:13px;font-weight:400;letter-spacing:-0.227px;color:#333;">Admin, Anton</div><div class="tx" style="left:694.1px;top:286.0px;font-size:13px;font-weight:400;letter-spacing:-0.091px;color:#333;">Organisation</div><div class="tx" style="left:694.1px;top:315.0px;font-size:13px;font-weight:400;letter-spacing:0.09px;color:#333;">Controlling</div><div class="tx" style="left:695.1px;top:344.0px;font-size:13px;font-weight:400;letter-spacing:-0.297px;color:#333;">Admin, Anton | Compliance, Carlo</div><div class="tx" style="left:694.1px;top:373.0px;font-size:13px;font-weight:400;letter-spacing:-0.2px;color:#333;">IT-Organisation</div><div class="tx" style="left:694.1px;top:402.0px;font-size:13px;font-weight:400;letter-spacing:0.047px;color:#333;">Notfall, Norbert</div><div class="tx" style="left:694.1px;top:431.0px;font-size:13px;font-weight:400;letter-spacing:-0.286px;color:#333;">Compliance, Carlo | Vorstand, Volker</div><div class="tx" style="left:694.1px;top:460.0px;font-size:13px;font-weight:400;letter-spacing:-0.091px;color:#333;">Organisation</div><div class="tx" style="left:694.1px;top:489.0px;font-size:13px;font-weight:400;letter-spacing:-0.2px;color:#333;">IT-Organisation</div><div class="tx" style="left:992.2px;top:199.0px;font-size:13px;font-weight:400;letter-spacing:0.0px;color:#333;">0</div><div class="tx" style="left:992.2px;top:228.0px;font-size:13px;font-weight:400;letter-spacing:0.0px;color:#333;">0</div><div class="tx" style="left:992.2px;top:257.0px;font-size:13px;font-weight:400;letter-spacing:0.0px;color:#333;">0</div><div class="tx" style="left:992.2px;top:286.0px;font-size:13px;font-weight:400;letter-spacing:0.0px;color:#333;">0</div><div class="tx" style="left:992.2px;top:315.0px;font-size:13px;font-weight:400;letter-spacing:0.0px;color:#333;">0</div><div class="tx" style="left:992.2px;top:344.0px;font-size:13px;font-weight:400;letter-spacing:0.0px;color:#333;">0</div><div class="tx" style="left:992.2px;top:373.0px;font-size:13px;font-weight:400;letter-spacing:0.0px;color:#333;">0</div><div class="tx" style="left:992.2px;top:402.0px;font-size:13px;font-weight:400;letter-spacing:0.0px;color:#333;">0</div><div class="tx" style="left:992.2px;top:431.0px;font-size:13px;font-weight:400;letter-spacing:0.0px;color:#333;">0</div><div class="tx" style="left:992.2px;top:460.0px;font-size:13px;font-weight:400;letter-spacing:0.0px;color:#333;">0</div><div class="tx" style="left:992.2px;top:489.0px;font-size:13px;font-weight:400;letter-spacing:0.0px;color:#333;">0</div><div class="tx" style="left:264.1px;top:557.0px;font-size:13px;font-weight:400;letter-spacing:-0.251px;color:#333;">B1-1: Fehler von Anwendern/Benutzern</div><div class="tx" style="left:264.1px;top:586.0px;font-size:13px;font-weight:400;letter-spacing:-0.295px;color:#333;">B1-2: Fehler im Betrieb</div><div class="tx" style="left:264.1px;top:615.0px;font-size:13px;font-weight:400;letter-spacing:-0.396px;color:#333;">B1-3: fehlerhafte Prozesse</div><div class="tx" style="left:264.1px;top:644.0px;font-size:13px;font-weight:400;letter-spacing:-0.324px;color:#333;">B2-1: Missbrauch und Diebstahl</div><div class="tx" style="left:264.1px;top:673.0px;font-size:13px;font-weight:400;letter-spacing:-0.215px;color:#333;">B2-2: Angriffe auf Verfügbarkeit und Angriffe durch Schadprogramme</div><div class="tx" style="left:264.1px;top:702.0px;font-size:13px;font-weight:400;letter-spacing:-0.361px;color:#333;">B2-3: Angriffe auf Menschen (Social Engineering, Erpressung, …)</div><div class="tx" style="left:264.1px;top:731.0px;font-size:13px;font-weight:400;letter-spacing:-0.352px;color:#333;">B3-1: Ausfall von Systemen</div><div class="tx" style="left:264.1px;top:760.0px;font-size:13px;font-weight:400;letter-spacing:-0.116px;color:#333;">B3-2: Ausfall von Kommunikationsinfrastruktur</div><div class="tx" style="left:264.1px;top:789.0px;font-size:13px;font-weight:400;letter-spacing:-0.124px;color:#333;">B3-3: Ausfall von Infrastrukturkomponenten</div><div class="tx" style="left:264.1px;top:818.0px;font-size:13px;font-weight:400;letter-spacing:-0.347px;color:#333;">B4-1: Gebäudeausfall</div><div class="tx" style="left:264.1px;top:847.0px;font-size:13px;font-weight:400;letter-spacing:-0.3px;color:#333;">B4-2: Personalausfall</div><div class="tx" style="left:264.1px;top:876.0px;font-size:13px;font-weight:400;letter-spacing:-0.244px;color:#333;">B4-3: Urteile, Beschlagnahmung, Reputation</div><div class="tx" style="left:54.5px;top:931.8px;font-size:13px;font-weight:400;letter-spacing:0.1px;color:#333;">Schließen</div><div class="tx" style="left:164.6px;top:931.8px;font-size:13px;font-weight:400;letter-spacing:-0.047px;color:#333;">Vorschlag anzeigen</div>
<div class="frame"></div>
</body></html>
